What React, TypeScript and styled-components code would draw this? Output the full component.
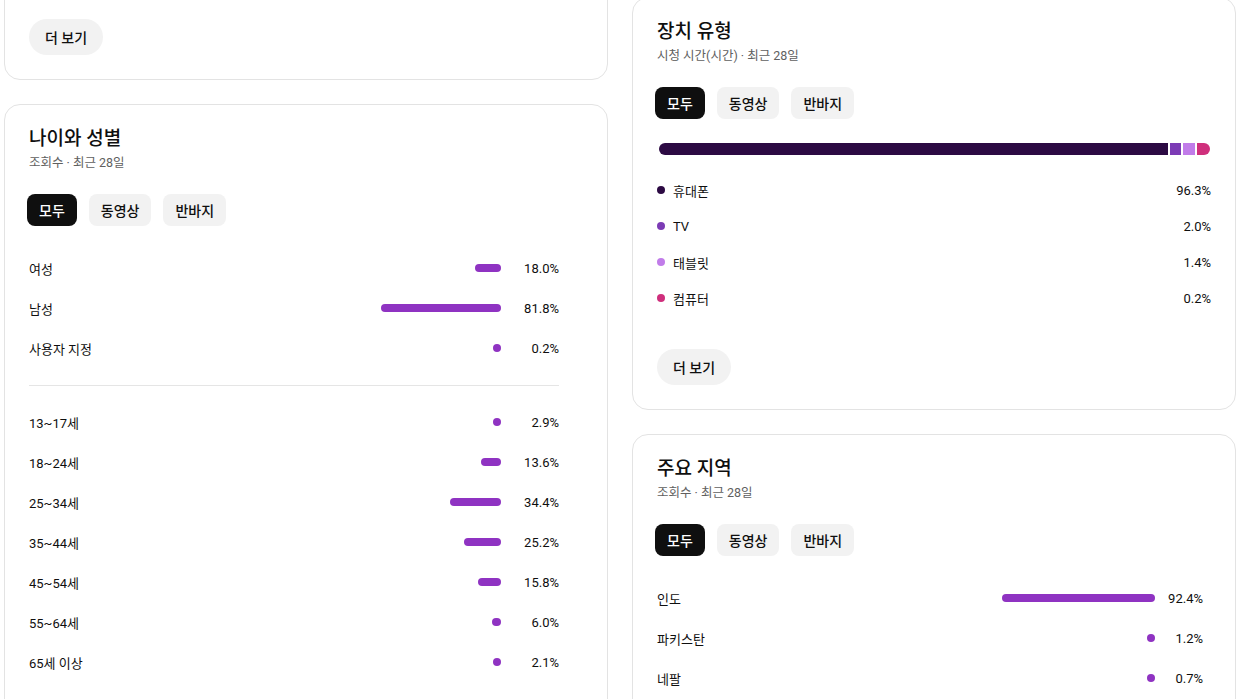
import React from "react"
import styled, { createGlobalStyle } from "styled-components"

const GlobalStyle = createGlobalStyle`
  html, body {
    margin: 0;
    padding: 0;
    background: #ffffff;
    font-family: Roboto, "Noto Sans CJK KR", "Noto Sans", sans-serif;
    color: #0f0f0f;
    overflow: hidden;
  }
`

const PURPLE = "#8f33c2"

const Page = styled.div`
  height: 699px;
  overflow: hidden;
  display: grid;
  grid-template-columns: 604px 604px;
  column-gap: 24px;
  padding-left: 4px;
  align-items: start;
`

const Column = styled.div<{ $offset: number }>`
  display: flex;
  flex-direction: column;
  gap: 24px;
  margin-top: ${p => p.$offset}px;
`

const Card = styled.section<{ $padTop?: number }>`
  background: #fff;
  border: 1px solid #e3e3e3;
  border-radius: 16px;
  padding: ${p => p.$padTop ?? 22}px 24px 24px;
  display: flex;
  flex-direction: column;
  align-items: flex-start;
`

const Title = styled.h2`
  margin: 0;
  font-size: 19px;
  line-height: 24px;
  font-weight: 500;
`

const Subtitle = styled.div`
  margin-top: 2px;
  font-size: 12.5px;
  line-height: 20px;
  color: #606060;
`

const Tabs = styled.div`
  display: flex;
  gap: 12px;
  margin: 21px 0 0 -2px;
`

const Tab = styled.button<{ $active?: boolean }>`
  border: none;
  height: 32px;
  padding: 0 12px;
  border-radius: 8px;
  font-family: inherit;
  font-size: 14px;
  font-weight: 500;
  background: ${p => (p.$active ? "#0f0f0f" : "#f2f2f2")};
  color: ${p => (p.$active ? "#ffffff" : "#0f0f0f")};
`

const MoreButton = styled.button<{ $top?: number }>`
  border: none;
  height: 36px;
  padding: 0 16px;
  margin-top: ${p => p.$top ?? 0}px;
  border-radius: 18px;
  background: #f2f2f2;
  font-family: inherit;
  font-size: 14px;
  font-weight: 500;
  color: #0f0f0f;
`

const List = styled.div<{ $width: number; $top?: number }>`
  width: ${p => p.$width}px;
  margin-top: ${p => p.$top ?? 0}px;
  display: flex;
  flex-direction: column;
`

const Row = styled.div<{ $height: number }>`
  height: ${p => p.$height}px;
  display: flex;
  align-items: center;
  font-size: 13px;
`

const Label = styled.span`
  flex: 1;
`

const Track = styled.div<{ $width: number }>`
  width: ${p => p.$width}px;
  display: flex;
  justify-content: flex-end;
`

const Bar = styled.div`
  height: 8px;
  min-width: 8px;
  border-radius: 4px;
  background: ${PURPLE};
`

const Pct = styled.span<{ $width: number }>`
  width: ${p => p.$width}px;
  text-align: right;
  font-size: 13px;
`

const Divider = styled.hr<{ $width: number }>`
  width: ${p => p.$width}px;
  border: none;
  border-top: 1px solid #e5e5e5;
  margin: 17px 0 16px;
`

const Stack = styled.div`
  align-self: stretch;
  height: 12px;
  margin: 24px 1px 0 2px;
  display: flex;
  gap: 2px;
  border-radius: 6px;
  overflow: hidden;
`

const Segment = styled.div<{ $color: string }>`
  height: 100%;
  background: ${p => p.$color};
`

const Dot = styled.span<{ $color: string }>`
  width: 8px;
  height: 8px;
  border-radius: 50%;
  background: ${p => p.$color};
  margin: 0 8px 0 0;
`

const Value = styled.span`
  margin-left: auto;
  font-size: 13px;
`

type Item = { label: string; value: number }

const gender: Item[] = [
  { label: "여성", value: 18.0 },
  { label: "남성", value: 81.8 },
  { label: "사용자 지정", value: 0.2 },
]

const ages: Item[] = [
  { label: "13~17세", value: 2.9 },
  { label: "18~24세", value: 13.6 },
  { label: "25~34세", value: 34.4 },
  { label: "35~44세", value: 25.2 },
  { label: "45~54세", value: 15.8 },
  { label: "55~64세", value: 6.0 },
  { label: "65세 이상", value: 2.1 },
]

const regions: Item[] = [
  { label: "인도", value: 92.4 },
  { label: "파키스탄", value: 1.2 },
  { label: "네팔", value: 0.7 },
]

const devices = [
  { label: "휴대폰", value: "96.3%", color: "#2c0a43", width: 507 },
  { label: "TV", value: "2.0%", color: "#7c3bb5", width: 11 },
  { label: "태블릿", value: "1.4%", color: "#c17ce9", width: 12 },
  { label: "컴퓨터", value: "0.2%", color: "#cf2f7c", width: 13 },
]

const FilterTabs = () => (
  <Tabs>
    <Tab $active>모두</Tab>
    <Tab>동영상</Tab>
    <Tab>반바지</Tab>
  </Tabs>
)

const BarRows: React.FC<{ items: Item[]; track: number; pct: number }> = ({ items, track, pct }) => (
  <>
    {items.map(it => (
      <Row key={it.label} $height={40}>
        <Label>{it.label}</Label>
        <Track $width={track}>
          <Bar style={{ width: (it.value / 100) * track }} />
        </Track>
        <Pct $width={pct}>{it.value.toFixed(1)}%</Pct>
      </Row>
    ))}
  </>
)

export default function App() {
  return (
    <>
      <GlobalStyle />
      <Page>
        <Column $offset={-120}>
          <Card $padTop={138}>
            <MoreButton>더 보기</MoreButton>
          </Card>
          <Card>
            <Title>나이와 성별</Title>
            <Subtitle>조회수 · 최근 28일</Subtitle>
            <FilterTabs />
            <List $width={530} $top={22}>
              <BarRows items={gender} track={147} pct={58} />
              <Divider $width={530} />
              <BarRows items={ages} track={147} pct={58} />
              <Divider $width={530} />
            </List>
          </Card>
        </Column>
        <Column $offset={-3}>
          <Card>
            <Title>장치 유형</Title>
            <Subtitle>시청 시간(시간) · 최근 28일</Subtitle>
            <FilterTabs />
            <Stack>
              {devices.map(d => (
                <Segment key={d.label} $color={d.color} style={d.label === "휴대폰" ? { flex: 1 } : { width: d.width }} />
              ))}
            </Stack>
            <List $width={554} $top={17}>
              {devices.map(d => (
                <Row key={d.label} $height={36}>
                  <Dot $color={d.color} />
                  <span>{d.label}</span>
                  <Value>{d.value}</Value>
                </Row>
              ))}
            </List>
            <MoreButton $top={33}>더 보기</MoreButton>
          </Card>
          <Card>
            <Title>주요 지역</Title>
            <Subtitle>조회수 · 최근 28일</Subtitle>
            <FilterTabs />
            <List $width={546} $top={22}>
              <BarRows items={regions} track={166} pct={48} />
            </List>
          </Card>
        </Column>
      </Page>
    </>
  )
}
